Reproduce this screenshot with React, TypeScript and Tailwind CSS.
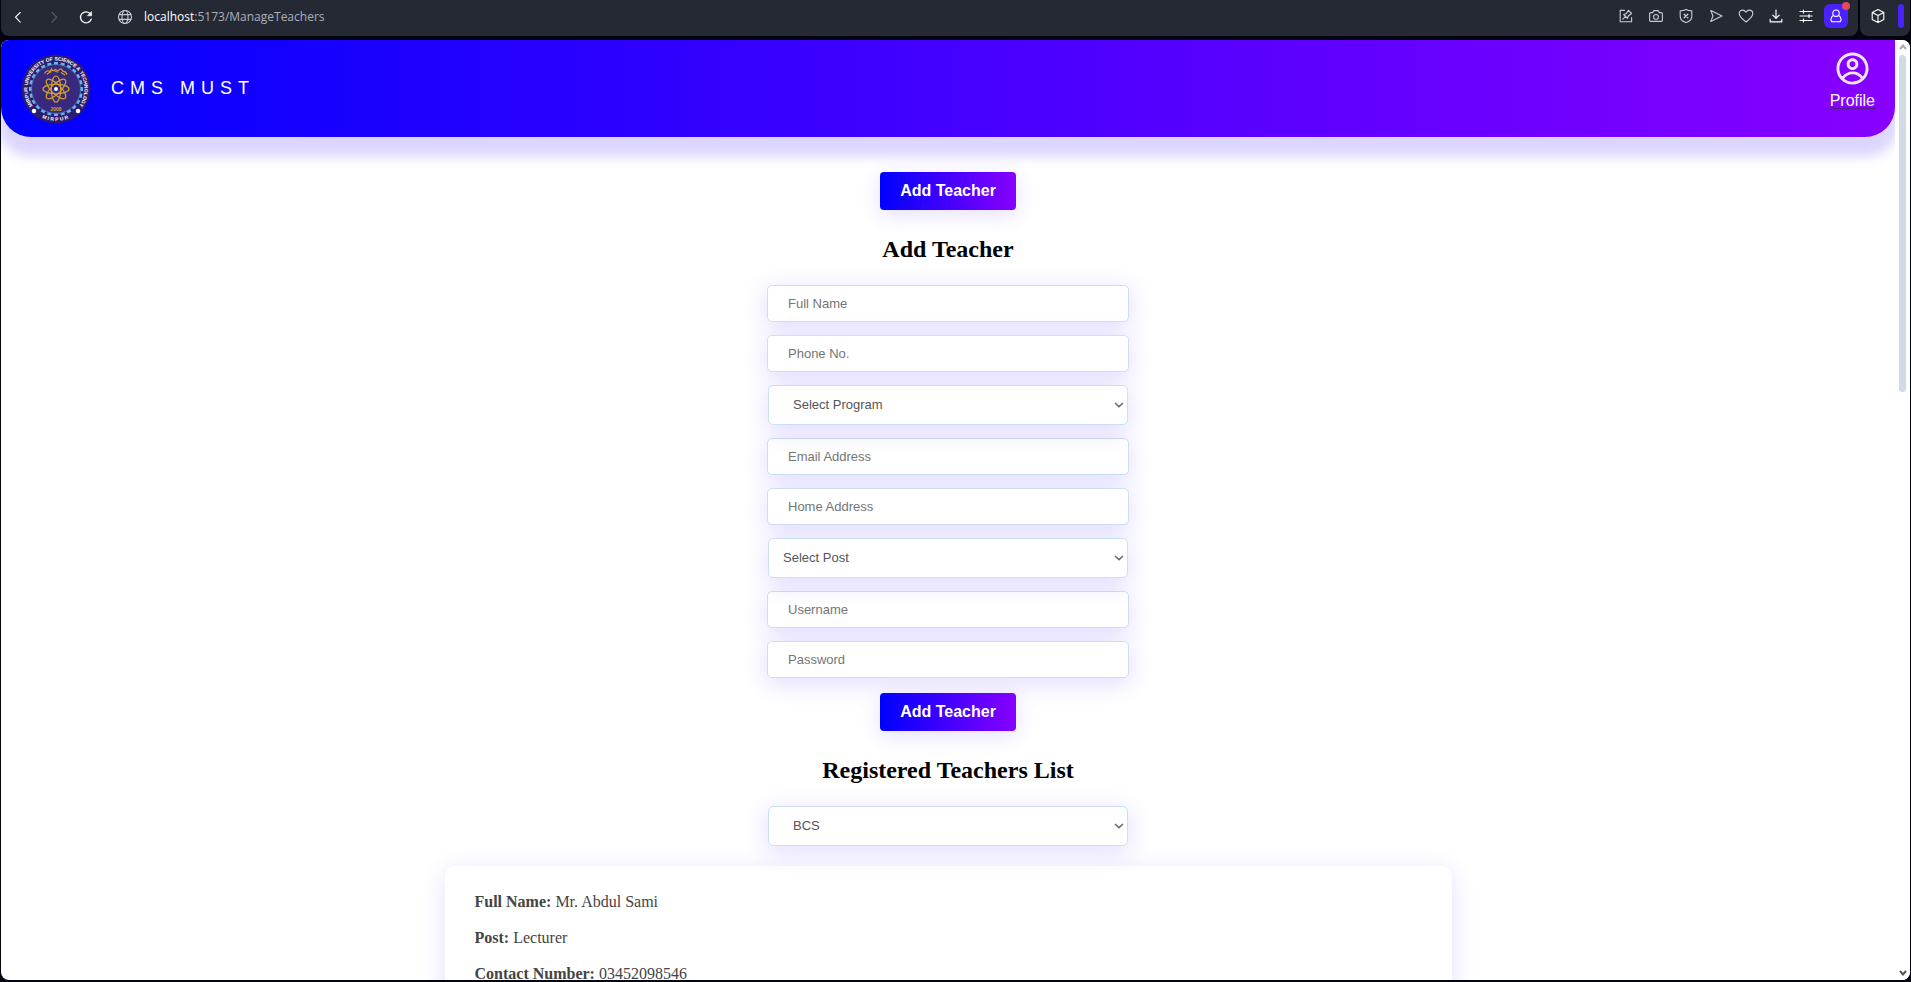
import type { ReactNode } from 'react';
import { CgProfile } from 'react-icons/cg';

function Icon({ children, className = 'text-[#c9ccd3]' }: { children: ReactNode; className?: string }) {
  return (
    <svg
      viewBox="0 0 16 16"
      className={`size-4 ${className}`}
      fill="none"
      stroke="currentColor"
      strokeWidth="1.1"
      strokeLinecap="round"
      strokeLinejoin="round"
      aria-hidden="true"
    >
      {children}
    </svg>
  );
}

function ToolButton({ label, children }: { label: string; children: ReactNode }) {
  return (
    <button type="button" aria-label={label} className="flex size-6 items-center justify-center">
      {children}
    </button>
  );
}

function BrowserBar() {
  return (
    <div className="flex h-9 shrink-0 gap-0.5 px-px">
      <div className="flex flex-1 items-start justify-between rounded-b-lg bg-[#252933] pt-1 pr-2.5 pl-[5px]">
        <div className="flex items-center">
          <ToolButton label="Back">
            <Icon className="text-white">
              <path d="M10.2 3.500 5.500 8.200l4.700 4.900" />
            </Icon>
          </ToolButton>
          <div className="ml-3 flex">
            <ToolButton label="Forward">
              <Icon className="text-[#5c606b]">
                <path d="m6 3.500 4.700 4.700L6 13.100" />
              </Icon>
            </ToolButton>
          </div>
          <div className="ml-2 flex">
            <ToolButton label="Reload">
              <Icon className="text-white">
                <path strokeWidth="1.3" d="M13.200 10.200A5.500 5.500 0 1 1 12.400 5" />
                <path fill="currentColor" strokeWidth="0.6" d="M13.6 2.8v4H9.7z" />
              </Icon>
            </ToolButton>
          </div>
          <div className="ml-[15px] flex">
            <ToolButton label="Site information">
              <Icon>
                <circle cx="8" cy="8" r="6.5" />
                <ellipse cx="8" cy="8" rx="3" ry="6.5" />
                <path d="M2.3 5.600h11.4M2.3 10.400h11.4" />
              </Icon>
            </ToolButton>
          </div>
          <p className="ml-[7px] pt-px font-['Open_Sans',sans-serif] text-[12px] leading-6 text-[#a9b0bd]">
            <span className="text-white">localhost</span>:5173/ManageTeachers
          </p>
        </div>
        <div className="flex items-center gap-1.5">
          <ToolButton label="Edit page">
            <Icon>
              <path d="M6.500 2.400H2.200v11.400h11.400V9.500" />
              <path d="m4.800 11.200 2.800-2.800M5.700 6.500l3.800 3.800.7-2.300 3.400-2.500-3.100-3.100L8 5.800z" />
            </Icon>
          </ToolButton>
          <ToolButton label="Snapshot">
            <Icon>
              <path d="M2.8 4.6h2l1-2h4.4l1 2h2a1.2 1.2 0 0 1 1.2 1.2v6.4a1.2 1.2 0 0 1-1.2 1.2H2.8a1.2 1.2 0 0 1-1.2-1.2V5.800a1.2 1.2 0 0 1 1.200-1.200z" />
              <circle cx="8" cy="8.900" r="2.400" />
            </Icon>
          </ToolButton>
          <ToolButton label="Tracker blocker">
            <Icon>
              <path d="M8 1.400c1.800 1 3.700 1.400 5.800 1.500v5.300c0 3-2.400 5.300-5.800 6.400-3.400-1.100-5.800-3.400-5.800-6.400V2.900C4.300 2.800 6.200 2.400 8 1.400z" />
              <path strokeWidth="1.4" d="m6.200 6.200 3.600 3.600m0-3.600L6.200 9.800" />
            </Icon>
          </ToolButton>
          <ToolButton label="Send">
            <Icon>
              <path d="M2.800 2.600 14 8 2.800 13.400 5 8z" />
            </Icon>
          </ToolButton>
          <ToolButton label="Favourite">
            <Icon>
              <path d="M8 14C4.500 11.400 1.200 8.800 1.200 5.600c0-2 1.500-3.500 3.400-3.500C6 2.100 7.200 2.900 8 4.200c.8-1.300 2-2.100 3.400-2.100 1.900 0 3.400 1.500 3.400 3.500 0 3.200-3.300 5.800-6.800 8.400z" />
            </Icon>
          </ToolButton>
          <ToolButton label="Downloads">
            <Icon className="text-white">
              <path strokeWidth="1.200" d="M8 2v8M4.800 7.200 8 10.400l3.200-3.200M2.200 11.400v2.400h11.600v-2.400" />
            </Icon>
          </ToolButton>
          <ToolButton label="Easy setup">
            <Icon className="text-white">
              <path strokeWidth="1.200" d="M2 3.500h12M2 8h12M2 12.500h12M5.500 2v3M11 6.500v3M5.500 11v3" />
            </Icon>
          </ToolButton>
          <button
            type="button"
            aria-label="Account"
            className="relative flex size-6 items-center justify-center rounded-md bg-[#4a22ff]"
          >
            <Icon className="text-white">
              <circle cx="8" cy="5.200" r="3.200" />
              <path d="M5.500 7.600C4 8.300 3 9.700 3 11.400c0 1.500.7 2.400 2 2.400h6c1.300 0 2-.9 2-2.400 0-1.700-1-3.100-2.500-3.800" />
            </Icon>
            <span className="absolute -top-0.5 -right-0.5 size-2 rounded-full bg-[#e2495b]" />
          </button>
        </div>
      </div>
      <div className="flex items-start justify-between rounded-b-lg bg-[#252933] pt-1 pr-1.5 pl-1.5">
        <ToolButton label="Extensions">
          <Icon className="text-white">
            <path d="m8 1.600 5.800 2.900v7L8 14.400l-5.800-2.900v-7zM2.200 4.500 8 7.600l5.800-3.100M8 7.600v6.800" />
          </Icon>
        </ToolButton>
        <span className="ml-2 h-6 w-1.5 rounded-full bg-[#4a22ff]" />
      </div>
    </div>
  );
}

const TEETH = Array.from({ length: 24 }, (_, i) => i * 15);
const ORBITS = [0, 45, 90, 135];

function Logo() {
  return (
    <svg viewBox="0 0 140 140" className="size-[70px]" role="img" aria-label="Mirpur University of Science and Technology">
      <defs>
        <path id="ring-top" d="M23.300 102.700A57 57 0 1 1 116.700 102.700" />
        <path id="ring-bottom" d="M21 111.200A64 64 0 0 0 119 111.200" />
      </defs>
      <circle cx="70" cy="70" r="69" fill="#2c1c70" />
      {TEETH.map((angle) => (
        <rect key={angle} x="66" y="16" width="8" height="6" fill="#68b5e8" transform={`rotate(${angle} 70 70)`} />
      ))}
      <circle cx="70" cy="70" r="49" fill="#38297c" stroke="#4f86c8" strokeWidth="1.500" />
      <g fill="none" stroke="#d3a02a" strokeWidth="2.400">
        {ORBITS.map((angle) => (
          <ellipse key={angle} cx="70" cy="70" rx="26" ry="9.500" transform={`rotate(${angle} 70 70)`} />
        ))}
      </g>
      <circle cx="70" cy="70" r="4" fill="#ffffff" />
      <path
        d="M47 39q4-7 8-5t6-4q3 6 8 1 5 4 8 0t7 4q5-1 8 6M52 41q6-6 9-5m6-1 8 1m5 1 8 5"
        fill="none"
        stroke="#d3a02a"
        strokeWidth="2.400"
      />
      <g fontFamily="Liberation Sans, sans-serif" fontWeight="700">
        <text x="70" y="114" textAnchor="middle" fontSize="10" fill="#d3a02a">
          2008
        </text>
        <g fill="#ffffff" fontSize="10">
          <text>
            <textPath href="#ring-top" startOffset="50%" textAnchor="middle">
              MIRPUR UNIVERSITY OF SCIENCE &amp; TECHNOLOGY
            </textPath>
          </text>
          <text letterSpacing="3">
            <textPath href="#ring-bottom" startOffset="50%" textAnchor="middle">
              MIRPUR
            </textPath>
          </text>
        </g>
      </g>
      <circle cx="26" cy="114" r="4.500" fill="#ffffff" />
      <circle cx="114" cy="114" r="4.500" fill="#ffffff" />
    </svg>
  );
}

function SiteHeader() {
  return (
    <header className="flex items-start justify-between rounded-b-[30px] bg-linear-to-r/srgb from-[#0000ff] to-[#8800ff] px-5 pt-[11px] pb-[13px] font-['Liberation_Sans',sans-serif] shadow-[0_16px_12px_4px_rgba(80,50,255,0.2)]">
      <div className="flex items-center gap-5 pt-[3px]">
        <Logo />
        <span className="pb-0.5 text-lg leading-6 tracking-[6px] text-white">CMS MUST</span>
      </div>
      <a
        href="/Profile"
        className="flex flex-col items-center gap-[3px] text-base text-white underline decoration-[#551a8b] decoration-1 underline-offset-2"
      >
        <CgProfile className="size-[35px] text-[#f2e6f2]" />
        Profile
      </a>
    </header>
  );
}

const CONTROL_SHADOW = 'shadow-[0_5px_25px_rgba(80,50,255,0.18)]';

function TextField({ label, name, type = 'text' }: { label: string; name: string; type?: string }) {
  return (
    <input
      type={type}
      name={name}
      aria-label={label}
      placeholder={label}
      className={`h-[37px] w-full rounded-[5px] border border-[#cddff2] bg-white px-5 text-[13px] text-[#555] placeholder:text-[#757575] ${CONTROL_SHADOW}`}
    />
  );
}

function SelectField({ label, options, padding = 'pl-6' }: { label: string; options: string[]; padding?: string }) {
  return (
    <div className="relative w-full max-w-[360px]">
      <select
        aria-label={label}
        className={`block h-10 w-full appearance-none rounded-[5px] border border-[#cddff2] bg-white pb-px text-[13px] text-[#555] ${padding} ${CONTROL_SHADOW}`}
      >
        {options.map((option) => (
          <option key={option}>{option}</option>
        ))}
      </select>
      <svg
        viewBox="0 0 10 6"
        className="pointer-events-none absolute top-[17px] right-1 h-1.5 w-2.5"
        fill="none"
        stroke="#6b6b6b"
        strokeWidth="1.600"
        aria-hidden="true"
      >
        <path d="m1 1 4 3.600L9 1" />
      </svg>
    </div>
  );
}

function AddButton({ type }: { type: 'button' | 'submit' }) {
  return (
    <button
      type={type}
      className="h-[38px] rounded bg-linear-to-r/srgb from-[#0000ff] to-[#8800ff] px-5 font-['Liberation_Sans',sans-serif] text-base font-bold text-white shadow-[0_5px_20px_rgba(80,50,255,0.15)]"
    >
      Add Teacher
    </button>
  );
}

function SectionTitle({ children }: { children: ReactNode }) {
  return <h2 className="mt-[21px] mb-[18px] text-2xl leading-9 font-bold text-black">{children}</h2>;
}

function Detail({ term, value }: { term: string; value: string }) {
  return (
    <div className="flex gap-1">
      <dt className="font-bold">{term}:</dt>
      <dd>{value}</dd>
    </div>
  );
}

function ScrollTrack() {
  return (
    <div className="flex w-[15px] shrink-0 flex-col items-center justify-between bg-white pt-1 pb-1" aria-hidden="true">
      <div className="flex min-h-0 flex-1 flex-col items-center gap-[5px]">
        <svg viewBox="0 0 8 6" className="h-1.5 w-2 shrink-0" fill="none" stroke="#a9a9a9" strokeWidth="2">
          <path d="m1 5 3-3.500L7 5" />
        </svg>
        <span className="h-[337px] w-[7px] rounded-full bg-[#d0dbe5]" />
      </div>
      <svg viewBox="0 0 8 6" className="h-1.5 w-2 shrink-0" fill="none" stroke="#555" strokeWidth="2">
        <path d="m1 1 3 3.500L7 1" />
      </svg>
    </div>
  );
}

export default function App() {
  return (
    <div className="flex h-screen flex-col gap-1 bg-[#02040f] pb-0.5">
      <BrowserBar />
      <div className="mx-px flex min-h-0 flex-1 overflow-hidden rounded-lg bg-white">
        <div className="min-w-0 flex-1 overflow-hidden">
          <SiteHeader />
          <main className="flex flex-col items-center pt-[35px] font-['Liberation_Serif',serif]">
            <AddButton type="button" />
            <SectionTitle>Add Teacher</SectionTitle>
            <form className="flex w-full max-w-[362px] flex-col items-center gap-[15px] font-['Liberation_Sans',sans-serif]">
              <div className="flex w-full flex-col items-center gap-[13px]">
                <TextField label="Full Name" name="fullName" />
                <TextField label="Phone No." name="phone" />
                <SelectField label="Program" options={['Select Program', 'BCS']} />
                <TextField label="Email Address" name="email" type="email" />
                <TextField label="Home Address" name="address" />
                <SelectField label="Post" options={['Select Post', 'Lecturer']} padding="pl-3.5" />
                <TextField label="Username" name="username" />
                <TextField label="Password" name="password" type="password" />
              </div>
              <AddButton type="submit" />
            </form>
            <SectionTitle>Registered Teachers List</SectionTitle>
            <div className="flex w-full max-w-[360px] font-['Liberation_Sans',sans-serif]">
              <SelectField label="Filter by program" options={['BCS']} />
            </div>
            <article className="mt-5 w-full max-w-[1007px] rounded-[10px] bg-white p-[30px] pt-[27px] shadow-[0_5px_25px_rgba(80,50,255,0.15)]">
              <dl className="flex flex-col gap-[18px] text-base leading-[18px] text-[#444]">
                <Detail term="Full Name" value="Mr. Abdul Sami" />
                <Detail term="Post" value="Lecturer" />
                <Detail term="Contact Number" value="03452098546" />
              </dl>
            </article>
          </main>
        </div>
        <ScrollTrack />
      </div>
    </div>
  );
}
